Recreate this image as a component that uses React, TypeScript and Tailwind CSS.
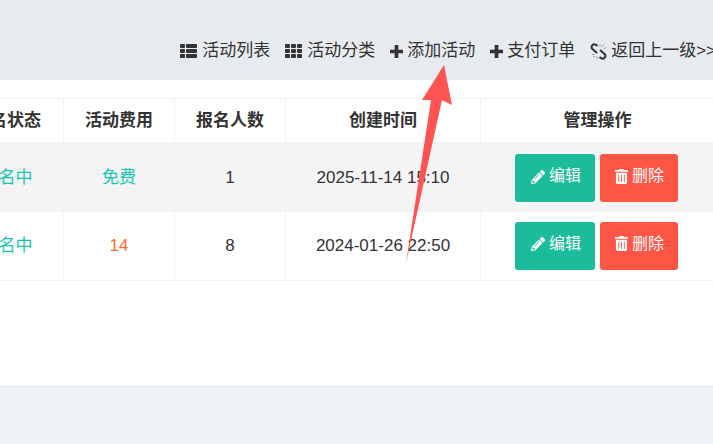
import { FaPencilAlt, FaTh, FaThList, FaTrashAlt } from "react-icons/fa";

const cols = "grid grid-cols-[111px_111px_111px_195px_233px] ml-[-47px] w-[761px]";
const cell = "flex items-center justify-center border-r border-[#f2f2f2]";
const shifted = "flex items-center justify-center border-r border-[#f2f2f2] pt-[2px]";

function PlusIcon() {
    return (
        <svg viewBox="0 0 14 14" className="w-[13px] h-[13px] fill-current">
            <path d="M5 0h4v5h5v4H9v5H5V9H0V5h5z" />
        </svg>
    );
}

// chain-broken glyph, the icon packages only have a different one
function ChainBrokenIcon() {
    return (
        <svg viewBox="0 0 17 17" className="w-[17px] h-[17px]" fill="none">
            <path d="M7.5 3 6 1.800A2.800 2.800 0 0 0 2.200 5.800L7 10" stroke="currentColor" strokeWidth="2" />
            <path d="M9.500 14 11 15.200A2.800 2.800 0 0 0 14.800 11.200L10 7" stroke="currentColor" strokeWidth="2" />
            <path d="M10 1v2.500M13.500 1.500 12 4M16 4.500 13.500 6M2 11.500h2.500M3 14.500 5 13M7 16v-2.500" stroke="#9aa0a5" strokeWidth="1" />
        </svg>
    );
}

function NavItem({ icon, label, gap }: { icon: React.ReactNode; label: string; gap: string }) {
    return (
        <div className={`flex items-center whitespace-nowrap ${gap}`}>
            {icon}
            <span>{label}</span>
        </div>
    );
}

function Actions({ className }: { className: string }) {
    return (
        <div className={`flex items-center justify-center h-full gap-[5px] pr-[2px] text-[16px] text-white ${className}`}>
            <button className="flex items-center justify-center gap-[4px] pl-[2px] w-[80px] h-[48px] rounded-[3px] bg-[#1abc9c]">
                <FaPencilAlt className="w-[14px] h-[14px] -mt-[3px]" />
                <span className="-mt-[4px]">编辑</span>
            </button>
            <button className="flex items-center justify-center gap-[4px] pl-[1px] w-[78px] h-[48px] rounded-[3px] bg-[#ff5545]">
                <FaTrashAlt className="w-[13px] h-[15px] -mt-[4px]" />
                <span className="-mt-[4px]">删除</span>
            </button>
        </div>
    );
}

export default function App() {
    return (
        <div className="relative w-[713px] h-[444px] overflow-hidden bg-[#eef2f5] text-[#333] text-[17px] font-['Liberation_Sans','Noto_Sans_CJK_SC',sans-serif]">
            {/* Top bar */}
            <div className="h-[80px] bg-[#e7ebee] flex items-start justify-end gap-[15px] pt-[40px] -mr-[3px] leading-[22px]">
                <NavItem gap="gap-[5px]" icon={<FaThList preserveAspectRatio="none" className="w-[17px] h-[16px]" />} label="活动列表" />
                <NavItem gap="gap-[5px]" icon={<FaTh preserveAspectRatio="none" className="w-[17px] h-[16px]" />} label="活动分类" />
                <NavItem gap="gap-[4px]" icon={<PlusIcon />} label="添加活动" />
                <NavItem gap="gap-[4px]" icon={<PlusIcon />} label="支付订单" />
                <NavItem gap="gap-[4px]" icon={<ChainBrokenIcon />} label="返回上一级>>" />
            </div>

            {/* Table card */}
            <div className="h-[307px] bg-white border-b border-[#e4e7ea] pt-[18px] overflow-hidden">
                <div className="border-t border-[#f2f2f2]">
                    <div className={`${cols} h-[43px] font-bold`}>
                        <div className={`${cell} pr-[2px]`}>报名状态</div>
                        <div className={cell}>活动费用</div>
                        <div className={cell}>报名人数</div>
                        <div className={cell}>创建时间</div>
                        <div className="flex items-center justify-center">管理操作</div>
                    </div>
                    <div className={`${cols} h-[70px] bg-[#f4f4f4]`}>
                        <div className={`${shifted} pr-[2px] text-[#19c5b5]`}>报名中</div>
                        <div className={`${shifted} text-[#19c5b5]`}>免费</div>
                        <div className={shifted}>1</div>
                        <div className={shifted}>2025-11-14 15:10</div>
                        <Actions className="pt-[2px]" />
                    </div>
                    <div className={`${cols} h-[69px] border-b border-[#f2f2f2]`}>
                        <div className={`${cell} pr-[2px] text-[#19c5b5]`}>报名中</div>
                        <div className={`${cell} text-[#ff6a2c]`}>14</div>
                        <div className={cell}>8</div>
                        <div className={cell}>2024-01-26 22:50</div>
                        <Actions className="pb-[1px]" />
                    </div>
                </div>
            </div>

            {/* Annotation arrow */}
            <svg className="absolute left-0 top-0 pointer-events-none" width="713" height="444">
                <polygon points="444,65 452,105 442,100 406,263 431,100 422,100" fill="#ff5252" />
            </svg>
        </div>
    );
}
